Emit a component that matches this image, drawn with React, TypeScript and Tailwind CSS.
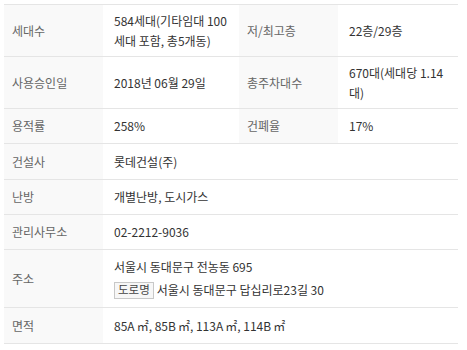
const font = { fontFamily: '"Noto Sans CJK KR", "Noto Sans", sans-serif' };

function Label({ children }: { children: React.ReactNode }) {
  return (
    <div className="flex items-center bg-[#f9f9f9] pl-2 text-[12px] leading-[20px] text-[#666]">
      {children}
    </div>
  );
}

function Value({ children, span }: { children: React.ReactNode; span?: boolean }) {
  return (
    <div
      className={
        "flex items-center pl-[11px] text-[12px] leading-[20px] text-[#333] whitespace-nowrap" +
        (span ? " col-span-3" : "")
      }
    >
      {children}
    </div>
  );
}

const areas = ["85A", "85B", "113A", "114B"];

export default function App() {
  return (
    <div className="bg-white pl-[4px] pt-[4px]" style={font}>
      <div className="w-[454px] border-t border-[#e5e5e5]">
        <div className="grid h-[52px] grid-cols-[99px_136px_99px_120px] border-b border-[#e5e5e5]">
          <Label>세대수</Label>
          <Value>
            <span>
              584세대(기타임대 100
              <br />
              세대 포함, 총5개동)
            </span>
          </Value>
          <Label>저/최고층</Label>
          <Value>22층/29층</Value>
        </div>
        <div className="grid h-[52px] grid-cols-[99px_136px_99px_120px] border-b border-[#e5e5e5]">
          <Label>사용승인일</Label>
          <Value>2018년 06월 29일</Value>
          <Label>총주차대수</Label>
          <Value>
            <span>
              670대(세대당 1.14
              <br />
              대)
            </span>
          </Value>
        </div>
        <div className="grid h-[35px] grid-cols-[99px_136px_99px_120px] border-b border-[#e5e5e5]">
          <Label>용적률</Label>
          <Value>258%</Value>
          <Label>건폐율</Label>
          <Value>17%</Value>
        </div>
        <div className="grid h-[36px] grid-cols-[99px_136px_99px_120px] border-b border-[#e5e5e5]">
          <Label>건설사</Label>
          <Value span>롯데건설(주)</Value>
        </div>
        <div className="grid h-[35px] grid-cols-[99px_136px_99px_120px] border-b border-[#e5e5e5]">
          <Label>난방</Label>
          <Value span>개별난방, 도시가스</Value>
        </div>
        <div className="grid h-[35px] grid-cols-[99px_136px_99px_120px] border-b border-[#e5e5e5]">
          <Label>관리사무소</Label>
          <Value span>02-2212-9036</Value>
        </div>
        <div className="grid h-[58px] grid-cols-[99px_136px_99px_120px] border-b border-[#e5e5e5]">
          <Label>주소</Label>
          <div className="col-span-3 flex flex-col justify-center gap-[3px] pl-[11px] text-[12px] leading-[20px] text-[#333]">
            <div>서울시 동대문구 전농동 695</div>
            <div className="flex items-center gap-[3px]">
              <span className="flex h-[17px] items-center border border-[#c8c8c8] bg-[#f7f7f7] px-[3px] text-[11.5px] leading-none text-[#444]">
                도로명
              </span>
              <span>서울시 동대문구 답십리로23길 30</span>
            </div>
          </div>
        </div>
        <div className="grid h-[36px] grid-cols-[99px_136px_99px_120px] border-b border-[#e5e5e5]">
          <Label>면적</Label>
          <Value span>
            <span>
              {areas.map((a, i) => (
                <span key={a}>
                  {a}
                  <span className="ml-[2px]">㎡</span>
                  {i < areas.length - 1 ? ", " : ""}
                </span>
              ))}
            </span>
          </Value>
        </div>
      </div>
    </div>
  );
}
